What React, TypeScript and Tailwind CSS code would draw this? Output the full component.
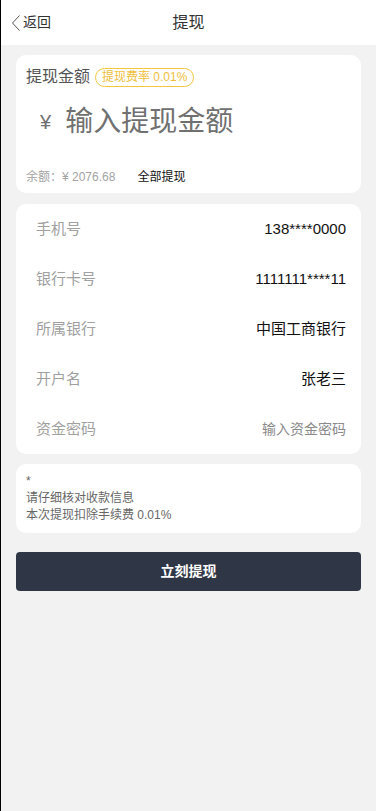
import React from "react";

const rows: { label: string; value: string; placeholder?: boolean }[] = [
  { label: "手机号", value: "138****0000" },
  { label: "银行卡号", value: "1111111****11" },
  { label: "所属银行", value: "中国工商银行" },
  { label: "开户名", value: "张老三" },
  { label: "资金密码", value: "输入资金密码", placeholder: true },
];

export default function App() {
  return (
    <div
      className="min-h-[811px] w-[376px] border-l border-black bg-[#f2f2f2]"
      style={{ fontFamily: '"Liberation Sans", "Noto Sans CJK SC", sans-serif' }}
    >
      <header className="relative flex h-[45px] items-center justify-center bg-white">
        <div className="absolute left-[10px] top-0 flex h-full items-center text-[14px] text-[#333]">
          <svg width="10" height="18" viewBox="0 0 10 18" className="mr-[2px]">
            <path d="M8.5 1.5 L1.5 9 L8.5 16.5" fill="none" stroke="#555" strokeWidth="1" />
          </svg>
          <span>返回</span>
        </div>
        <div className="text-[16px] text-[#333]">提现</div>
      </header>

      <section className="mx-[15px] mt-[10px] h-[138px] rounded-[10px] bg-white px-[10px] pt-[10px]">
        <div className="flex items-center">
          <span className="text-[16px] text-[#555]">提现金额</span>
          <span className="ml-[5px] flex h-[19px] items-center rounded-full border border-[#f3c640] px-[6px] text-[12px] text-[#efbe3a]">
            提现费率 0.01%
          </span>
        </div>
        <div className="mt-[13px] flex items-center pl-[14px] text-[#6f6f6f]">
          <span className="text-[20px]">¥</span>
          <span className="ml-[14px] text-[28px] leading-[40px] text-[#707070]">输入提现金额</span>
        </div>
        <div className="mt-[26px] flex items-center text-[12px]">
          <span className="text-[#a3a3a3]">余额：¥ 2076.68</span>
          <span className="ml-[22px] text-[#111]">全部提现</span>
        </div>
      </section>

      <section className="mx-[15px] mt-[11px] rounded-[10px] bg-white pl-[20px] pr-[15px]">
        {rows.map((r) => (
          <div key={r.label} className="flex h-[50px] items-center justify-between">
            <span className="text-[15px] text-[#a0a0a0]">{r.label}</span>
            <span className={r.placeholder ? "text-[14px] text-[#8a8a8a]" : "text-[15px] text-[#111]"}>
              {r.value}
            </span>
          </div>
        ))}
      </section>

      <section className="mx-[15px] mt-[10px] rounded-[10px] bg-white px-[10px] py-[9px] text-[12px] leading-[17px] text-[#666]">
        <div>*</div>
        <div>请仔细核对收款信息</div>
        <div>本次提现扣除手续费 0.01%</div>
      </section>

      <button className="mx-[15px] mt-[19px] flex h-[39px] w-[345px] items-center justify-center rounded-[4px] bg-[#2f3747] text-[14px] font-bold text-white">
        立刻提现
      </button>
    </div>
  );
}
